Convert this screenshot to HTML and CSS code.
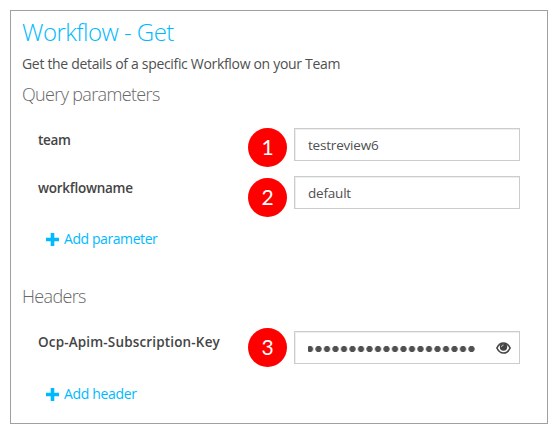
FILE: index.html
```html
<!DOCTYPE html>
<html lang="en">
<head>
<meta charset="utf-8">
<title>Workflow - Get</title>
<link rel="stylesheet" href="styles.css">
</head>
<body>
<main class="panel">
  <h1 class="title">Workflow - Get</h1>
  <p class="description">Get the details of a specific Workflow on your Team</p>
  <section class="query">
    <h2 class="heading">Query parameters</h2>
    <div class="row row-first">
      <span class="label label-team">team</span>
      <span class="step">1</span>
      <div class="field">testreview6</div>
    </div>
    <div class="row row-second">
      <span class="label label-workflow">workflowname</span>
      <span class="step step-low">2</span>
      <div class="field">default</div>
    </div>
    <a class="add"><svg class="plus" viewBox="0 0 13 13"><path d="M4.7 0h3.6v4.7H13v3.6H8.3V13H4.7V8.3H0V4.7h4.7z"/></svg><span class="add-parameter">Add parameter</span></a>
  </section>
  <section class="headers">
    <h2 class="heading">Headers</h2>
    <div class="row">
      <span class="label label-key">Ocp-Apim-Subscription-Key</span>
      <span class="step step-high">3</span>
      <div class="field field-key">
        <span class="mask"></span>
        <svg class="eye" viewBox="0 0 15 12"><path d="M.9 6C2.500 2.700 4.700 1 7.500 1s5 1.700 6.600 5c-1.600 3.300-3.800 5-6.600 5S2.500 9.300.9 6z" fill="#fff" stroke="#444" stroke-width="1.700"/><circle cx="7.500" cy="5" r="3.700"/><path d="M5.600 5c0-1.200.7-1.900 1.900-1.900" fill="none" stroke="#ddd"/></svg>
      </div>
    </div>
    <a class="add"><svg class="plus" viewBox="0 0 13 13"><path d="M4.7 0h3.6v4.7H13v3.6H8.3V13H4.7V8.3H0V4.7h4.7z"/></svg><span class="add-header">Add header</span></a>
  </section>
</main>
</body>
</html>
```
FILE: styles.css
```css
* { box-sizing: border-box; }
body {
  margin: 0;
  padding: 10px 8px 10px 10px;
  background: #fff;
  color: #505050;
  font: 14px/20px "Open Sans", "Noto Sans", sans-serif;
}
.panel {
  width: 538px;
  height: 414px;
  padding: 5px 26px 0 11px;
  border: 1px solid #a0a0a0;
  white-space: nowrap;
}
h1, h2, p { margin: 0; }
.title {
  color: #00b9ff;
  font-size: 24px;
  font-weight: 300;
  line-height: 32px;
  letter-spacing: -0.53px;
}
.description {
  margin-top: 6px;
  font-size: 14px;
  letter-spacing: -0.32px;
}
.heading {
  color: #686868;
  font-size: 18px;
  font-weight: 300;
  line-height: 24px;
  letter-spacing: -0.65px;
}
.query { margin-top: 8px; }
.row {
  display: grid;
  grid-template-columns: 210px 46px 226px;
  height: 33px;
  margin-top: 23px;
  padding-left: 16px;
  box-sizing: content-box;
  width: 482px;
}
.row-first { margin-top: 22px; }
.row-second { margin-top: 15px; }
.label {
  margin-top: 2px;
  color: #444;
  font-size: 13.5px;
  font-weight: 600;
}
.label-team { letter-spacing: -0.35px; }
.label-workflow { letter-spacing: -0.25px; }
.label-key { margin-top: 1px; letter-spacing: 0.16px; }
.step {
  width: 39px;
  height: 39px;
  border-radius: 50%;
  background: #f00;
  color: #fff;
  font: 21px/38px Lato, sans-serif;
  text-align: center;
}
.step-low { margin-top: 2px; }
.step-high { margin-top: -3px; }
.field {
  height: 33px;
  border: 1px solid #ccc;
  box-shadow: inset 1px 1px 0 #eee;
  padding: 0 8px 0 13px;
  font-size: 13.5px;
  line-height: 33px;
  letter-spacing: -0.2px;
}
.field-key {
  display: flex;
  align-items: center;
  justify-content: space-between;
}
.mask {
  width: 167px;
  height: 8px;
  margin-top: 2px;
  background: radial-gradient(circle at 4.250px 4px, #505050 2.700px, transparent 3.500px) -2.250px 0 / 8.500px 8px repeat-x;
}
.eye { width: 15px; height: 12px; fill: #444; }
.add {
  display: flex;
  align-items: center;
  gap: 5px;
  height: 20px;
  margin: 20px 0 0 24px;
  color: #00b9ff;
}
.plus { width: 13px; height: 13px; fill: #00b9ff; }
.add-parameter { letter-spacing: -0.42px; }
.add-header { letter-spacing: -0.33px; }
.headers { margin-top: 35px; }
```
